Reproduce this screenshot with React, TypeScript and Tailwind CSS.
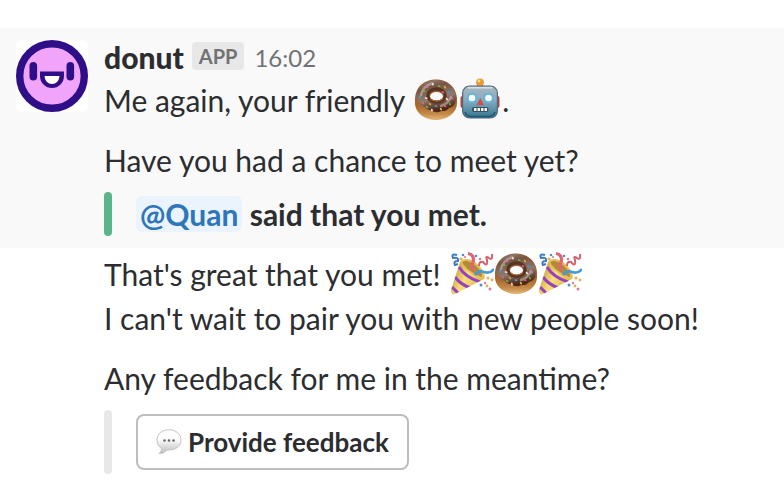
import type { ReactNode } from "react";

const emojiClass = "h-11 w-11 shrink-0";

function Avatar() {
  return (
    <svg viewBox="0 0 72 72" role="img" aria-label="donut" className="h-18 w-18 rounded-md bg-white">
      <circle cx="36" cy="36" r="32.3" fill="#f0a5fa" stroke="#2f0f87" strokeWidth="7.4" />
      <rect x="13.5" y="22" width="7.600" height="18.500" rx="3.800" fill="#2f0f87" />
      <rect x="50.5" y="22" width="7.600" height="18.500" rx="3.800" fill="#2f0f87" />
      <path d="M24 31.500H48V36A12 12 0 0 1 24 36Z" fill="#2f0f87" />
      <path d="M28.5 36H43.5A7.5 8 0 0 1 28.5 36Z" fill="#fff" />
    </svg>
  );
}

function Doughnut() {
  const sprinkles: [number, number, string, number][] = [
    [13, 9, "#e46c9d", 30], [19, 6, "#eee9d8", 80], [25, 8, "#68b84c", 15], [31, 9, "#e8ae3d", 60],
    [35, 14, "#4e8fd2", 20], [38, 20, "#e278a3", 80], [33, 21, "#ece9dc", 40], [36, 26, "#61ae4b", 70],
    [31, 28, "#dc668d", 20], [27, 31, "#e8bd49", 60], [22, 28, "#57a7da", 15], [18, 32, "#f1e6d5", 80],
    [13, 29, "#72b84b", 25], [9, 25, "#dc698f", 65], [12, 20, "#ede4d0", 10], [6, 19, "#549ad2", 80],
    [10, 13, "#77b951", 20], [29, 14, "#df5e7c", 30], [16, 26, "#dc9938", 40],
  ];
  return (
    <svg viewBox="0 0 44 44" role="img" aria-label="doughnut" className={emojiClass}>
      <defs>
        <linearGradient id="dough" x1="0" y1="0" x2="0" y2="1">
          <stop offset="0" stopColor="#8c5430" />
          <stop offset=".65" stopColor="#a9682f" />
          <stop offset=".85" stopColor="#c58a48" />
          <stop offset="1" stopColor="#e3b878" />
        </linearGradient>
        <linearGradient id="icing" x1="0" y1="0" x2=".3" y2="1">
          <stop offset="0" stopColor="#a39282" />
          <stop offset=".3" stopColor="#765444" />
          <stop offset=".65" stopColor="#8f7b6e" />
          <stop offset="1" stopColor="#4c2817" />
        </linearGradient>
      </defs>
      <path fillRule="evenodd" fill="url(#dough)" d="M1 20C2 8 11 1.500 22 1.500s20 7 21 18.500v5c0 10-10 17-21 17S1 35 1 25ZM16 18.500a6.500 4.500 0 1 0 13 0a6.500 4.500 0 1 0-13 0Z" />
      <path fillRule="evenodd" fill="url(#icing)" d="M2 18C4 8 12 2 22 2s19 7 20 16c0 6-1 8-3 10-2 2-4 1-6 4-3 2-5 0-8 2-4 1-6-1-9-2-4 0-4-3-7-4-4-3-6-5-7-10ZM15.500 18a7 5.300 0 1 0 14 0a7 5.300 0 1 0-14 0Z" />
      <ellipse cx="22.500" cy="17.500" rx="8.700" ry="6.700" fill="none" stroke="#5b3321" strokeWidth="3.200" />
      <path d="M16 20.500q6.500 5.500 13 0" fill="none" stroke="#a86836" strokeWidth="1.200" />
      <path d="M7 17Q9 8 18 5.500M27 28Q34 26 37 19" fill="none" stroke="#cfc5ba" strokeWidth="2.400" strokeLinecap="round" opacity=".55" />
      {sprinkles.map(([x, y, color, angle]) => (
        <rect key={`${x}-${y}`} x={x - 1.3} y={y - 0.7} width="2.800" height="1.600" rx=".7" fill={color} transform={`rotate(${angle} ${x} ${y})`} />
      ))}
    </svg>
  );
}

function Robot() {
  return (
    <svg viewBox="0 0 44 44" role="img" aria-label="robot" className={emojiClass}>
      <defs>
        <linearGradient id="steel" x1="0" y1="0" x2="0" y2="1">
          <stop offset="0" stopColor="#aab7c0" />
          <stop offset=".45" stopColor="#86abc0" />
          <stop offset="1" stopColor="#34768f" />
        </linearGradient>
      </defs>
      <rect x="2.500" y="18" width="5" height="12" rx="2" fill="#b9413d" />
      <rect x="36.500" y="18" width="5" height="12" rx="2" fill="#b9413d" />
      <path d="M16.500 9.500q5.500-6 11 0Z" fill="#685c8a" />
      <circle cx="22" cy="4.300" r="3.900" fill="#e99a33" />
      <circle cx="21" cy="3" r="1.400" fill="#ffdc83" />
      <rect x="4.600" y="8" width="34.800" height="32" rx="7" fill="url(#steel)" stroke="#51697a" strokeWidth="1.200" />
      <path d="M10 9.800H34" stroke="#d7e1e6" strokeWidth="1.500" strokeLinecap="round" />
      <path d="M7 34Q8 38 13 38.500H31Q36 38 37 34" fill="none" stroke="#1e5a73" strokeWidth="1.500" />
      <circle cx="14" cy="20" r="4.300" fill="#fff" stroke="#62b5dc" strokeWidth="2" />
      <circle cx="30.500" cy="20" r="4.300" fill="#fff" stroke="#62b5dc" strokeWidth="2" />
      <path d="M22.300 20l3.700 7h-7.400Z" fill="#cf4f47" />
      <rect x="14" y="29" width="16.500" height="5" rx="2" fill="#385260" />
      <path d="M16 31.500H29" stroke="#f4f4ef" strokeWidth="2.800" strokeDasharray="2.500 1" />
    </svg>
  );
}

function PartyPopper() {
  return (
    <svg viewBox="0 0 44 44" role="img" aria-label="party popper" className={emojiClass}>
      <defs>
        <linearGradient id="cone" x1="0" y1=".3" x2="1" y2=".8">
          <stop offset="0" stopColor="#b98925" />
          <stop offset=".4" stopColor="#f8df7d" />
          <stop offset="1" stopColor="#c8962b" />
        </linearGradient>
        <clipPath id="cone-shape">
          <path d="M10 10Q15 4 25 10Q37 20 34 27L5 42Q1 43 1 38Z" />
        </clipPath>
      </defs>
      <g clipPath="url(#cone-shape)">
        <rect width="44" height="44" fill="url(#cone)" />
        <path d="M9 15Q15 25 30 30M5 25Q11 33 21 36M2 35Q6 39 9 42" fill="none" stroke="#9740c4" strokeWidth="3" />
        <path d="M10 10Q15 4 25 10Q37 20 34 27Q26 26 19 20Q12 15 10 10Z" fill="#e4be55" />
        <path d="M12.500 10Q17 7 25 13Q33 20 32 25Q25 23 19 18Q13 13 12.500 10Z" fill="#b4883a" />
      </g>
      <path d="M18 1.500Q25 3 23 10T24 18" fill="none" stroke="#df6670" strokeWidth="3.200" />
      <path d="M7 3Q1 1 3 6Q9 5 8 9Q3 9 5 13L8 12" fill="none" stroke="#397bc3" strokeWidth="2" />
      <path d="M29 14Q29 9 33 10Q38 16 37 8Q35 3 39 6Q43 9 42 2" fill="none" stroke="#d2606b" strokeWidth="2" />
      <path d="M25 23Q28 18 34 20T44 17" fill="none" stroke="#4699d8" strokeWidth="2.600" />
      <g fill="#4f8ed2">
        <circle cx="13" cy="3" r="1.300" /><circle cx="26" cy="4" r="1.300" /><circle cx="31" cy="33" r="1.500" />
      </g>
      <g fill="#edae55">
        <circle cx="11" cy="7" r="1.500" /><circle cx="38" cy="26" r="1.500" /><circle cx="42" cy="28" r="1.400" /><circle cx="37" cy="34" r="1.400" />
      </g>
      <g fill="#df7b9b">
        <circle cx="15" cy="5" r="1.100" /><circle cx="30" cy="7" r="1.300" /><circle cx="40" cy="37" r="1.500" /><circle cx="35" cy="31" r="1.200" />
      </g>
    </svg>
  );
}

function SpeechBalloon() {
  return (
    <svg viewBox="0 0 26 26" aria-hidden="true" className="h-[26px] w-[26px]">
      <defs>
        <linearGradient id="balloon" x1="0" y1="0" x2="0" y2="1">
          <stop offset=".4" stopColor="#fdfdfd" />
          <stop offset="1" stopColor="#bcbcbc" />
        </linearGradient>
      </defs>
      <path d="M13 .8C6 .8 1 5 1 11c0 4 2 7 4.500 8.500C5.500 22 4.500 23 3 24.500c4 .3 6-1.500 8-3.500 9 .5 14-4 14-10C25 5 20 .8 13 .8Z" fill="url(#balloon)" stroke="#c4c4c4" strokeWidth="1" />
      <circle cx="8.500" cy="11.500" r="1.300" fill="#666" />
      <circle cx="13" cy="11.500" r="1.300" fill="#666" />
      <circle cx="17.500" cy="11.500" r="1.300" fill="#666" />
    </svg>
  );
}

function Attachment({ color, children }: { color: string; children: ReactNode }) {
  return (
    <div className="mt-2.5 flex gap-6">
      <div className={`w-2 rounded-full ${color}`} />
      {children}
    </div>
  );
}

export default function App() {
  return (
    <main className="bg-white pt-7 font-['Lato',sans-serif] text-[30px] leading-[44px] text-[#2c2d30]">
      <article className="flex gap-4 bg-[#f9f9f9] px-4 pt-2 pb-3">
        <div className="shrink-0 pt-1">
          <Avatar />
        </div>
        <div className="min-w-0 flex-1">
          <header className="flex h-[42px] items-center gap-2">
            <h1 className="font-black">donut</h1>
            <span className="mb-0.5 rounded bg-[#e8e8e8] px-[7px] text-xl leading-7 font-bold text-[#717274]">APP</span>
            <time className="ml-0.5 pt-0.5 text-2xl leading-10 text-[#717274]">16:02</time>
          </header>
          <p className="flex items-center">
            <span className="mr-0.5 whitespace-pre">Me again, your friendly </span>
            <Doughnut />
            <Robot />
            <span>.</span>
          </p>
          <p className="mt-4">Have you had a chance to meet yet?</p>
          <Attachment color="bg-[#5ab58a]">
            <p className="font-bold">
              <a href="#quan" className="rounded-md bg-[#ebf4fc] px-1 text-[#2d76ba]">@Quan</a> said that you met.
            </p>
          </Attachment>
        </div>
      </article>
      <article className="pt-1 pr-4 pb-5 pl-[104px]">
        <p className="flex items-center">
          <span className="mr-0.5 whitespace-pre">That's great that you met! </span>
          <PartyPopper />
          <Doughnut />
          <PartyPopper />
        </p>
        <p>I can't wait to pair you with new people soon!</p>
        <p className="mt-4">Any feedback for me in the meantime?</p>
        <Attachment color="bg-[#e8e8e8]">
          <div className="py-1">
            <button type="button" className="flex h-14 items-center gap-1.5 rounded-lg border-2 border-[#bdbdbe] bg-white px-[18px] text-[26px] font-bold">
              <SpeechBalloon />
              Provide feedback
            </button>
          </div>
        </Attachment>
      </article>
    </main>
  );
}
